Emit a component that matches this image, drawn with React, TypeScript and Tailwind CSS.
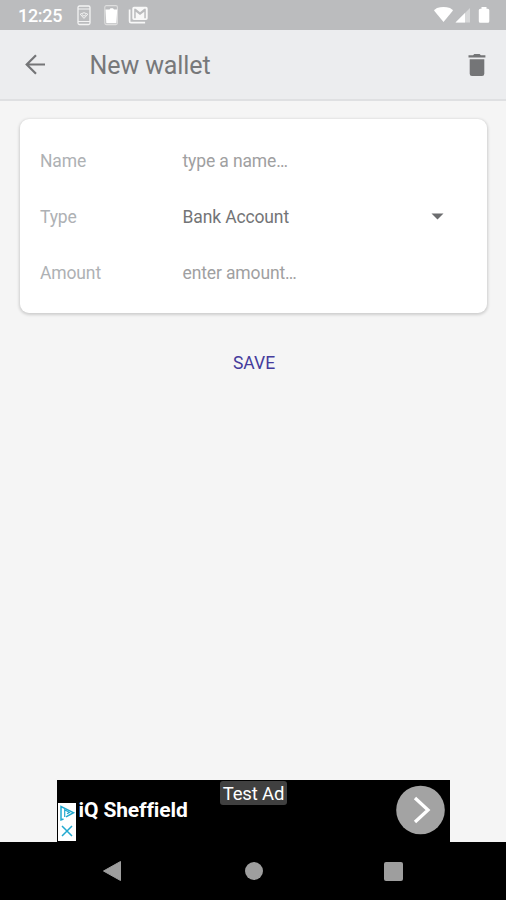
import React from 'react';

function StatusBar() {
  return (
    <div className="flex h-[30px] shrink-0 items-center bg-[#bbbcbe] pl-[18px] text-white">
      <span className="w-[59px] text-[18px] leading-[30px] font-medium tracking-[-0.3px] pt-[2px]">12:25</span>
      <svg className="h-[30px] w-[76px]" viewBox="77 0 76 30" fill="none">
        <rect x="78" y="6" width="12" height="18.5" rx="1.500" stroke="#f3f3f3" strokeWidth="1.300" />
        <path d="M78 9h12M78 21.500h12" stroke="#f3f3f3" strokeWidth="1.200" />
        <path d="M80.200 14.200q3.800-3 7.600 0L84 18.400zM82 14.600l2 1.600 2-1.600" stroke="#f3f3f3" strokeWidth="1" />
        <rect x="104.800" y="5.600" width="12.600" height="19" rx="1.500" stroke="#dedede" strokeWidth="1.100" />
        <path d="M105.500 9.500h4l1-1.300h2.500l1 1.300h3.200l-.8 13.700H106.300z" fill="#fff" />
        <path d="M129.600 9.500v11.700q0 1.500 1.500 1.500h14" stroke="#f8f8f8" strokeWidth="1.700" />
        <path fillRule="evenodd" d="M134 6.800h12q1.700 0 1.700 1.700v9.800q0 1.700-1.700 1.700h-12q-1.700 0-1.700-1.700V8.500q0-1.700 1.700-1.700zm.2 2v9.500h1.500v-6.500l4.300 3.300 4.300-3.300v6.500h1.500V8.800h-1.500l-4.300 3.400-4.300-3.400z" fill="#f8f8f8" />
      </svg>
      <svg className="ml-auto mr-[14px] h-[30px] w-[60px]" viewBox="432 0 60 30">
        <path d="M434 10.500q1-1.500 3-2.500 6.500-2 13 0 2 1 3 2.500L443.500 22z" fill="#fff" />
        <path d="M455.500 22.500L470 8v14.500z" fill="#d7d8d9" />
        <path d="M455.500 22.500L465 13v9.500z" fill="#fff" />
        <path d="M481.500 7h5v1.800h1.300q1.500 0 1.500 1.500v11q0 1.500-1.500 1.500h-7.500q-1.500 0-1.500-1.500v-11q0-1.500 1.500-1.500h1.200z" fill="#fff" />
      </svg>
    </div>
  );
}

function Header() {
  return (
    <header className="flex h-[71px] shrink-0 items-center border-b-2 border-[#dfe0e2] bg-[#ecedef] pl-[25px] text-[#77787a]">
      <svg className="h-[22px] w-[22px]" viewBox="0 0 22 22" fill="none" stroke="#747577" strokeWidth="2.200">
        <path d="M20 10.500H2M11 1.200L1.700 10.500 11 19.800" />
      </svg>
      <h1 className="ml-[42.500px] text-[25px] leading-[30px] font-normal tracking-[-0.100px] pt-[2px]">New wallet</h1>
      <svg className="ml-auto mr-[19px] h-[24px] w-[20px]" viewBox="0 0 20 24" fill="#747577">
        <path d="M1.500 2.300h4.500l1.300-1.300h5.300l1.300 1.300h4.500v2.200H1.500zM2.700 6.300h14.600v14.400q0 2.300-2.300 2.300H5q-2.300 0-2.300-2.300z" />
      </svg>
    </header>
  );
}

function Row({ label, value, valueClass, children }: { label: string; value: string; valueClass: string; children?: React.ReactNode }) {
  return (
    <div className="flex h-14 items-center text-[17.500px] tracking-[-0.130px]">
      <span className="w-[142.500px] text-[#aeb1b4]">{label}</span>
      <span className={valueClass}>{value}</span>
      {children}
    </div>
  );
}

function AdBanner() {
  return (
    <div className="relative mr-[56px] ml-[57px] flex h-[62px] bg-black text-white">
      <div className="mt-[23px] ml-px h-[38px] w-[18px] bg-white">
        <svg className="h-[38px] w-[18px]" viewBox="0 0 18 38" fill="none" stroke="#22a9d0" strokeWidth="1.500">
          <path d="M5.500 16L3 17V3.500L15.500 9.700 8 13.800" />
          <path d="M6.700 14V6.800L11.500 9.500 9 10.800" strokeWidth="1.200" />
          <path d="M4 23l10 10M14 23L4 33" />
        </svg>
      </div>
      <span className="mt-[16px] ml-[2.500px] text-[21px] leading-[28px] font-bold tracking-[-0.120px]">iQ Sheffield</span>
      <span className="absolute top-px left-[163px] flex h-[24px] w-[67px] items-center justify-center rounded-[3px] bg-[#404040] pt-[3px] text-[18.500px] tracking-[-0.150px]">Test Ad</span>
      <svg className="mt-[5px] mr-[5px] ml-auto h-[50px] w-[50px]" viewBox="0 0 50 50" fill="none">
        <circle cx="25.500" cy="25" r="24.300" fill="#a3a3a3" />
        <path d="M20 13l13 12-13 12" stroke="#fff" strokeWidth="3.300" />
      </svg>
    </div>
  );
}

export default function App() {
  return (
    <div className="flex h-[900px] w-[506px] flex-col overflow-hidden bg-[#f5f5f5] font-['Roboto',sans-serif]">
      <StatusBar />
      <Header />
      <main className="flex flex-1 flex-col">
        <section className="ml-[20px] mt-[18px] mr-[19px] h-[194px] rounded-[9px] bg-white px-[20px] pt-[14px] shadow-[0_1px_3px_1px_rgba(0,0,0,0.16)]">
          <Row label="Name" value="type a name…" valueClass="text-[#9fa0a1]" />
          <Row label="Type" value="Bank Account" valueClass="text-[#737476]">
            <svg className="mr-[23px] mb-[2px] ml-auto h-[7px] w-[13px]" viewBox="0 0 13 7">
              <path d="M.5.500h12l-6 6z" fill="#6c6d6f" />
            </svg>
          </Row>
          <Row label="Amount" value="enter amount…" valueClass="text-[#9fa0a1]" />
        </section>
        <button className="mx-auto mt-[36px] h-[28px] pr-2 pl-[10px] text-[17.500px] text-[#453c9c]">SAVE</button>
        <div className="mt-auto">
          <AdBanner />
        </div>
      </main>
      <nav className="flex h-[58px] shrink-0 items-center bg-black">
        <svg className="ml-[102px] h-[22px] w-[20px]" viewBox="0 0 20 22">
          <path d="M1.500 11L18.500 1.500v19z" fill="#9e9e9e" stroke="#9e9e9e" strokeLinejoin="round" />
        </svg>
        <span className="ml-[122.500px] h-[18px] w-[18px] rounded-full bg-[#9e9e9e]" />
        <span className="ml-[121.500px] h-[19px] w-[19px] rounded-[2px] bg-[#9e9e9e]" />
      </nav>
    </div>
  );
}
